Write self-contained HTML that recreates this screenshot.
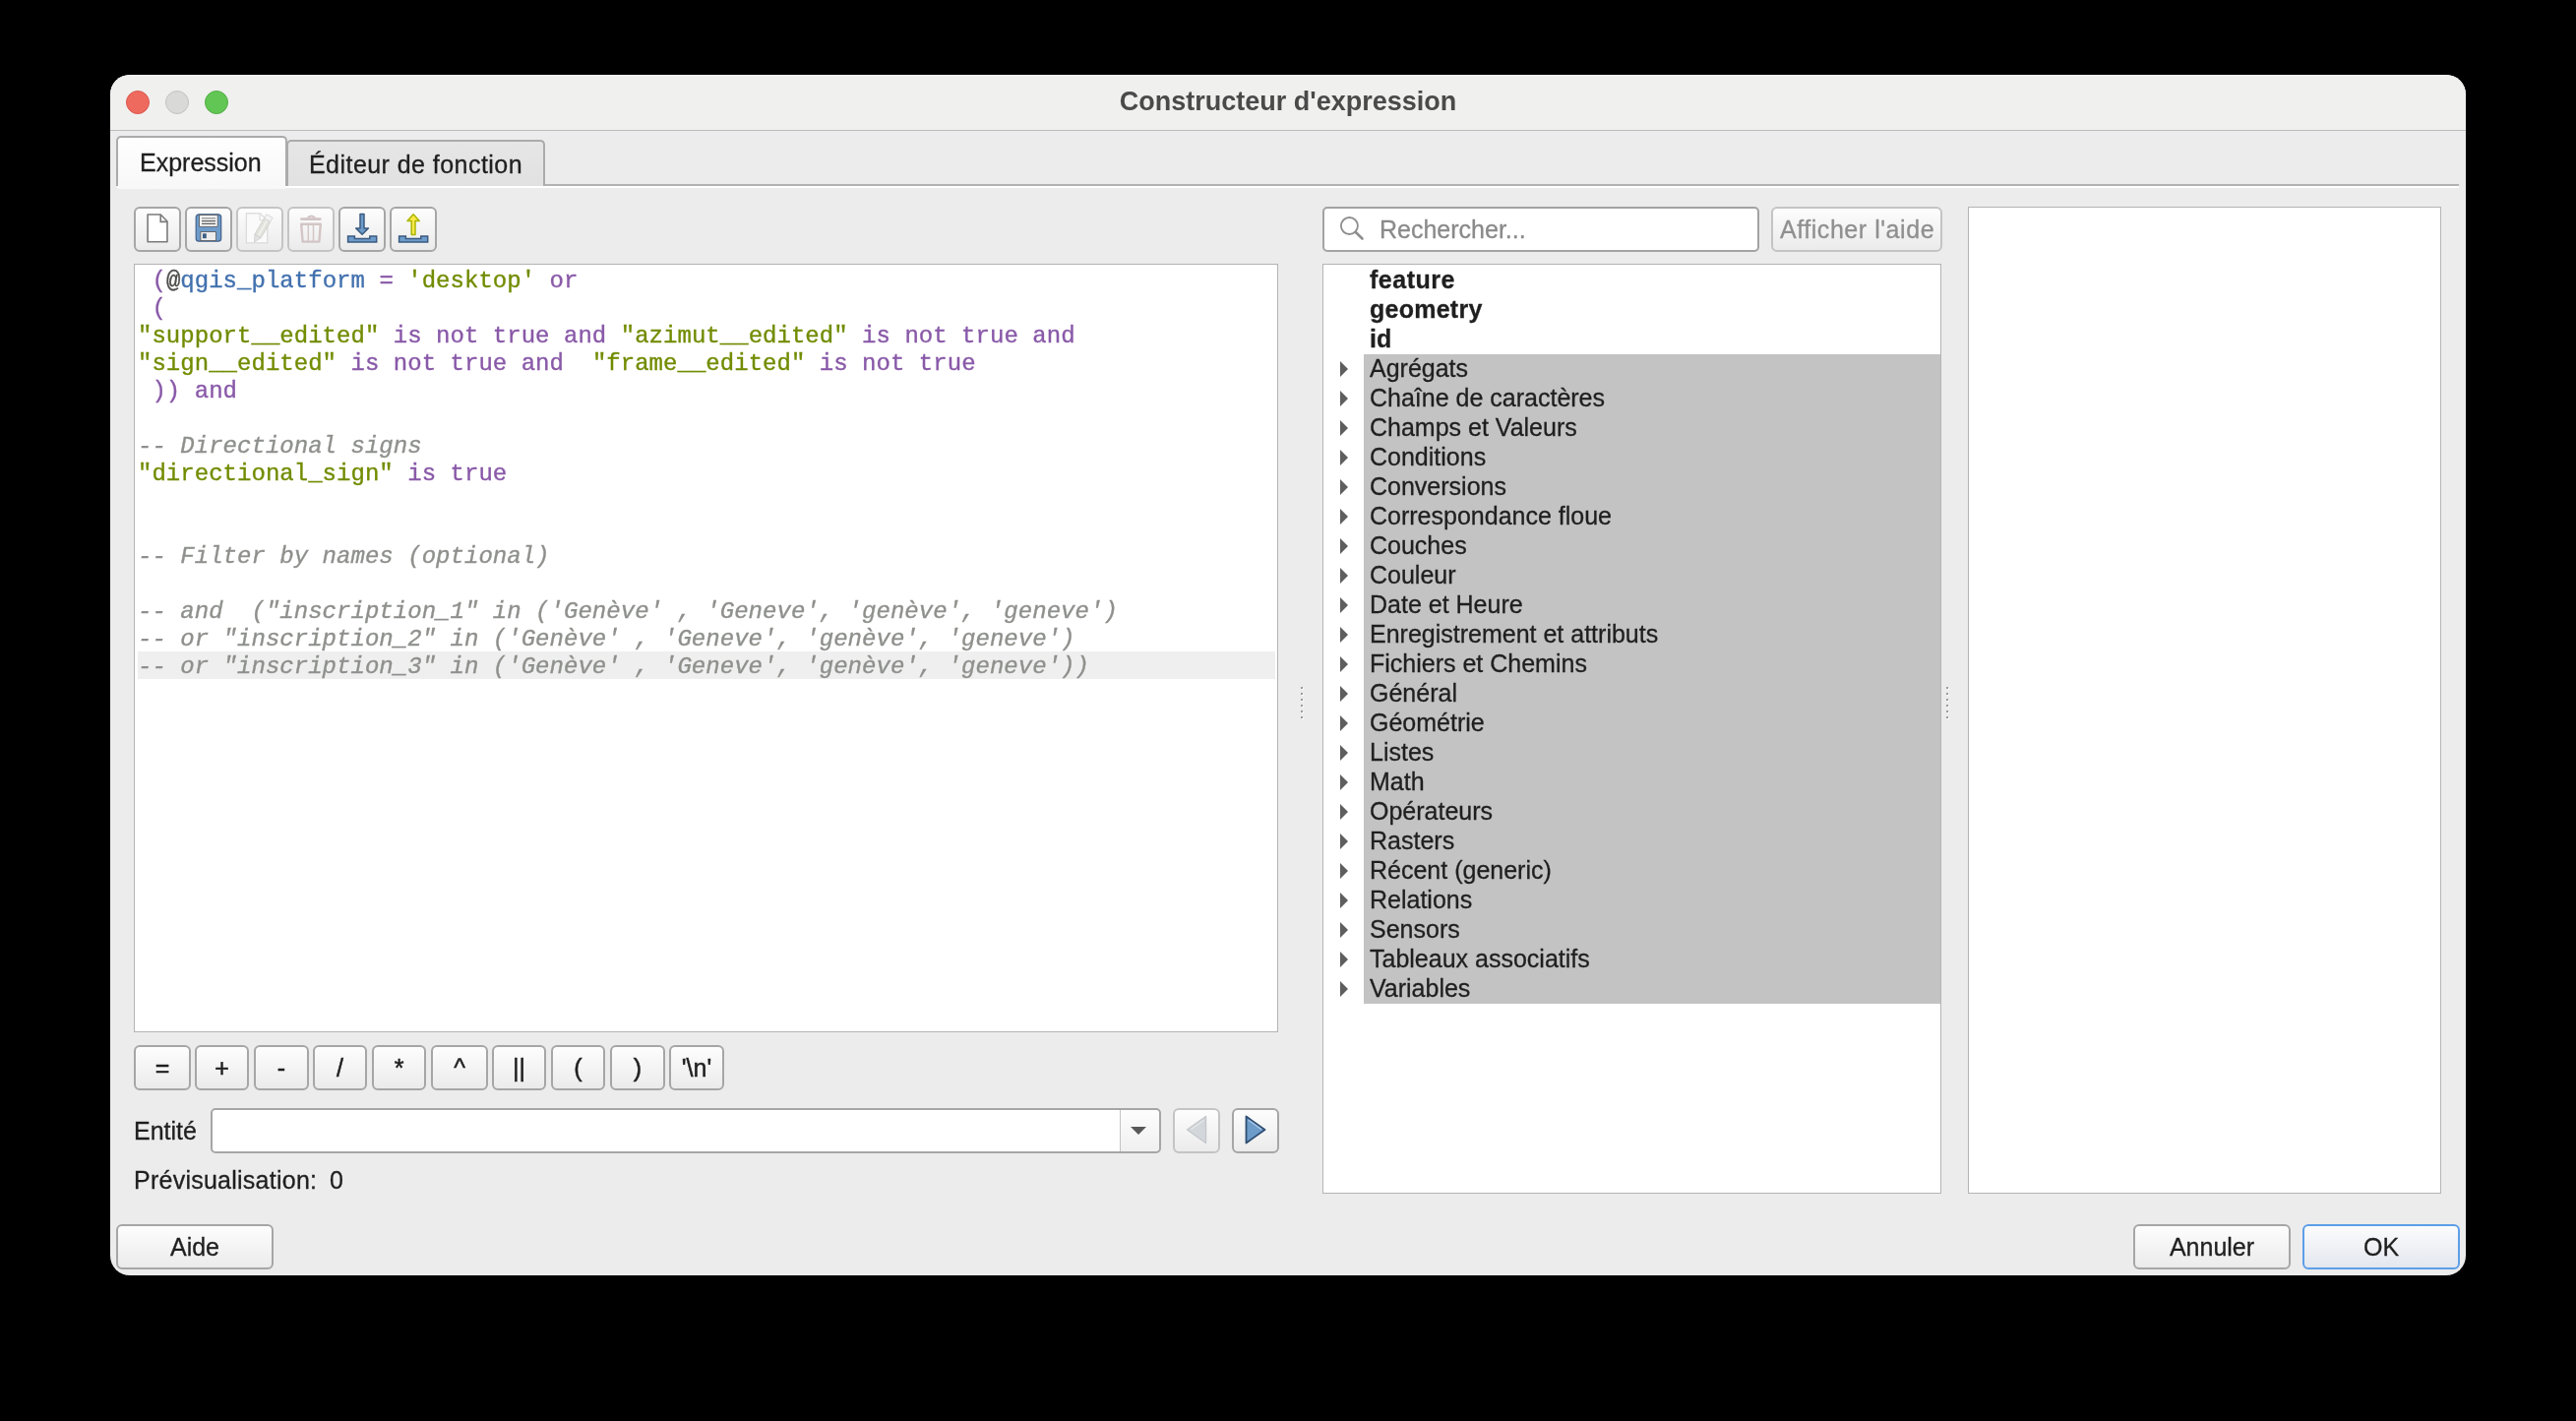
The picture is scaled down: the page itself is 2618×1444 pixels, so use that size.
<!DOCTYPE html>
<html><head><meta charset="utf-8">
<style>
*{box-sizing:border-box;margin:0;padding:0}
html,body{width:2618px;height:1444px;background:#000;overflow:hidden}
body{position:relative;font-family:"Liberation Sans",sans-serif;color:#1d1d1d}
.a{position:absolute}
#win{position:absolute;left:112px;top:76px;width:2394px;height:1220px;background:#ececec;border-radius:20px;overflow:hidden}
#titlebar{position:absolute;left:0;top:0;width:2394px;height:57px;background:#f0f0ef;border-bottom:1px solid #bcbcbc}
.tl{position:absolute;top:16px;width:24px;height:24px;border-radius:50%}
#title{position:absolute;left:0;width:2394px;top:12px;text-align:center;font-weight:bold;font-size:27px;color:#4a4a4a;line-height:30px;will-change:transform}
.btn{position:absolute;border:2px solid #a6a6a6;border-radius:6px;background:linear-gradient(#fdfdfd,#ebebeb)}
.btn.dis{border-color:#c4c4c4}
.ui{position:absolute;font-size:25px;line-height:30px;white-space:pre;will-change:transform;color:#1f1f1f;-webkit-text-stroke:0.3px currentColor}
.panel{position:absolute;background:#fff;border:1px solid #b4b4b4}
#code{position:absolute;left:139.5px;top:271.5px;letter-spacing:0.03px;-webkit-text-stroke:0.35px currentColor;font-family:"Liberation Mono",monospace;font-size:24px;line-height:28px;white-space:pre;color:#4d4d4c;will-change:transform}
.p{color:#8959a8}.b{color:#4271ae}.g{color:#718c00}.c{color:#8e908c;font-style:italic}
.tree{position:absolute;left:1392px;margin-top:-1px;font-size:25px;line-height:30px;white-space:pre;color:#1f1f1f;will-change:transform;-webkit-text-stroke:0.3px currentColor}
.arr{position:absolute;left:1362px;width:0;height:0;border-top:8px solid transparent;border-bottom:8px solid transparent;border-left:8px solid #5e5e5e;margin-top:-1px}
.op{position:absolute;top:1065px;-webkit-text-stroke:0.5px currentColor;height:44px;text-align:center;font-size:25px;line-height:40px;color:#1f1f1f;will-change:transform}
</style></head><body>
<div id="win">
  <div id="titlebar">
    <div class="tl" style="left:16px;background:#ee6a5f;border:1px solid #d9574d"></div>
    <div class="tl" style="left:56px;background:#d9d9d8;border:1px solid #c2c2c1"></div>
    <div class="tl" style="left:96px;background:#62c654;border:1px solid #52ad45"></div>
    <div id="title">Constructeur d'expression</div>
  </div>
</div>

<!-- tab bar -->
<div class="a" style="left:119px;top:187px;width:2380px;height:2px;background:#b2b2b2"></div>
<div class="a" style="left:119px;top:189px;width:2380px;height:2px;background:#fff"></div>
<div class="a" style="left:291px;top:142px;width:263px;height:47px;background:linear-gradient(#e6e6e6,#e1e1e1);border:2px solid #ababab;border-bottom:none;border-radius:5px 5px 0 0"></div>
<div class="a" style="left:118px;top:138px;width:174px;height:51px;background:linear-gradient(#fefefe,#f8f8f8);border:2px solid #ababab;border-bottom:none;border-radius:5px 5px 0 0"></div><div class="a" style="left:120px;top:189px;width:170px;height:3px;background:#f8f8f8"></div>
<div class="ui" style="left:142px;top:150px">Expression</div>
<div class="ui" style="left:314px;top:151.5px;letter-spacing:0.45px">Éditeur de fonction</div>

<!-- toolbar buttons -->
<div class="btn" style="left:136px;top:210px;width:48px;height:46px"></div>
<div class="btn" style="left:188px;top:210px;width:48px;height:46px"></div>
<div class="btn dis" style="left:240px;top:210px;width:48px;height:46px"></div>
<div class="btn dis" style="left:292px;top:210px;width:48px;height:46px"></div>
<div class="btn" style="left:344px;top:210px;width:48px;height:46px"></div>
<div class="btn" style="left:396px;top:210px;width:48px;height:46px"></div>


<!-- toolbar icons -->
<svg class="a" style="left:136px;top:210px" width="48" height="46" viewBox="0 0 48 46"><path d="M14.1,8 H27.2 L34,15 V35.8 H14.1 Z" fill="#fff" stroke="#7b7b7b" stroke-width="1.6" stroke-linejoin="round"/><path d="M27.2,8 V15.4 H34" fill="none" stroke="#7b7b7b" stroke-width="1.6"/></svg>
<svg class="a" style="left:188px;top:210px" width="48" height="46" viewBox="0 0 48 46"><rect x="11.2" y="7.8" width="25.5" height="27.4" rx="3" fill="#6d9ccc" stroke="#44618a" stroke-width="1.2"/><rect x="14.6" y="8.6" width="18.6" height="11.7" fill="#f2f2f2" stroke="#555" stroke-width="0.8"/><rect x="17" y="11.3" width="14" height="1.2" fill="#8e8e8e"/><rect x="17" y="14" width="14" height="1.2" fill="#5e5e5e"/><rect x="17" y="16.8" width="14" height="1.2" fill="#5e5e5e"/><rect x="15.9" y="25.6" width="15.6" height="9" fill="#ededed" stroke="#555" stroke-width="0.8"/><rect x="18" y="27.3" width="3.8" height="4.9" fill="#3f5f86"/></svg>
<svg class="a" style="left:240px;top:210px" width="48" height="46" viewBox="0 0 48 46"><path d="M10.3,6.9 H24.1 L31.8,13.8 V36.9 H10.3 Z" fill="#fafafa" stroke="#d9d9d9" stroke-width="1.2"/><path d="M24.1,6.9 V13.8 H31.8" fill="none" stroke="#dcdcdc" stroke-width="1.1"/><polygon points="18.5,36 18.92,28.14 25.14,31.78" fill="#e2e2e2" stroke="#d2d2d2" stroke-width="0.9" stroke-linejoin="round"/><polygon points="18.92,28.14 28.52,11.74 34.74,15.38 25.14,31.78" fill="#e3e3de" stroke="#cdcdc9" stroke-width="0.9"/><line x1="22.6" y1="29.5" x2="31.2" y2="14.2" stroke="#f1f1ee" stroke-width="1.6"/><polygon points="28.52,11.74 30.89,7.68 37.11,11.32 34.74,15.38" fill="#f3f3f3" stroke="#d6d6d6" stroke-width="0.9"/></svg>
<svg class="a" style="left:292px;top:210px" width="48" height="46" viewBox="0 0 48 46"><path d="M20.6,11.4 Q24.4,7.6 28.2,11.4" fill="none" stroke="#d3c5c5" stroke-width="1.8"/><rect x="13.1" y="11.2" width="21.6" height="2.8" rx="1.4" fill="#d3c5c5"/><path d="M14.2,17.8 H33.8 L32.4,35.6 H15.6 Z" fill="none" stroke="#d3c5c5" stroke-width="2.4" stroke-linejoin="round"/><line x1="21.3" y1="18" x2="21.3" y2="35" stroke="#d3c5c5" stroke-width="1.5"/><line x1="26.5" y1="18" x2="26.5" y2="35" stroke="#d3c5c5" stroke-width="1.5"/></svg>
<svg class="a" style="left:344px;top:210px" width="48" height="46" viewBox="0 0 48 46"><path d="M22,7.6 H26 V21.9 H30.4 L24.1,28.3 L17.7,21.9 H22 Z" fill="#6d9ccc" stroke="#3c5a7f" stroke-width="1.5" stroke-linejoin="round"/><path d="M9.6,29.9 H16.4 V32.4 H31.8 V29.9 H38.7 V35.9 H9.6 Z" fill="#6d9ccc" stroke="#3c5a7f" stroke-width="1.5"/></svg>
<svg class="a" style="left:396px;top:210px" width="48" height="46" viewBox="0 0 48 46"><path d="M24.1,7.8 L30.2,14.6 H26 V28.6 H22.2 V14.6 H18 Z" fill="#fde84a" stroke="#a9b700" stroke-width="1.5" stroke-linejoin="round"/><path d="M9.6,29.9 H16.4 V32.4 H31.8 V29.9 H38.7 V35.9 H9.6 Z" fill="#6d9ccc" stroke="#3c5a7f" stroke-width="1.5"/></svg>

<!-- editor -->
<div class="panel" style="left:136px;top:268px;width:1163px;height:781px"></div>
<div class="a" style="left:140px;top:662px;width:1156px;height:28px;background:#efefef"></div>
<div id="code"> <span class="p">(</span>@<span class="b">qgis_platform</span> <span class="p">=</span> <span class="g">'desktop'</span> <span class="p">or</span>
 <span class="p">(</span>
<span class="g">"support__edited"</span> <span class="p">is not true and</span> <span class="g">"azimut__edited"</span> <span class="p">is not true and</span>
<span class="g">"sign__edited"</span> <span class="p">is not true and</span>  <span class="g">"frame__edited"</span> <span class="p">is not true</span>
 <span class="p">)) and</span>

<span class="c">-- Directional signs</span>
<span class="g">"directional_sign"</span> <span class="p">is true</span>


<span class="c">-- Filter by names (optional)</span>

<span class="c">-- and  ("inscription_1" in ('Genève' , 'Geneve', 'genève', 'geneve')</span>
<span class="c">-- or "inscription_2" in ('Genève' , 'Geneve', 'genève', 'geneve')</span>
<span class="c">-- or "inscription_3" in ('Genève' , 'Geneve', 'genève', 'geneve'))</span></div>

<!-- search -->
<div class="a" style="left:1344px;top:210px;width:444px;height:46px;background:#fff;border:2px solid #a3a3a3;border-radius:5px"></div>
<svg class="a" style="left:1358px;top:216px" width="32" height="32" viewBox="0 0 32 32"><circle cx="13.4" cy="13.5" r="8.5" fill="none" stroke="#8e8e8e" stroke-width="1.8"/><line x1="19.6" y1="19.8" x2="26.5" y2="26.5" stroke="#8e8e8e" stroke-width="2.6" stroke-linecap="round"/></svg>
<div class="ui" style="left:1402px;top:218px;color:#8a8a8a">Rechercher...</div>
<div class="btn dis" style="left:1800px;top:210px;width:174px;height:46px"></div>
<div class="ui" style="left:1809px;top:218px;color:#8f8f8f;letter-spacing:0.55px">Afficher l'aide</div>

<!-- tree -->
<div class="panel" style="left:1344px;top:268px;width:629px;height:945px"></div>
<div class="a" style="left:1386px;top:360px;width:586px;height:660px;background:#c3c3c3"></div>
<div class="tree" style="top:270px;font-weight:bold;letter-spacing:0.5px">feature</div>
<div class="tree" style="top:300px;font-weight:bold;letter-spacing:0.25px">geometry</div>
<div class="tree" style="top:330px;font-weight:bold">id</div>
<div class="arr" style="top:368px"></div>
<div class="tree" style="top:360px">Agrégats</div>
<div class="arr" style="top:398px"></div>
<div class="tree" style="top:390px">Chaîne de caractères</div>
<div class="arr" style="top:428px"></div>
<div class="tree" style="top:420px">Champs et Valeurs</div>
<div class="arr" style="top:458px"></div>
<div class="tree" style="top:450px">Conditions</div>
<div class="arr" style="top:488px"></div>
<div class="tree" style="top:480px">Conversions</div>
<div class="arr" style="top:518px"></div>
<div class="tree" style="top:510px">Correspondance floue</div>
<div class="arr" style="top:548px"></div>
<div class="tree" style="top:540px">Couches</div>
<div class="arr" style="top:578px"></div>
<div class="tree" style="top:570px">Couleur</div>
<div class="arr" style="top:608px"></div>
<div class="tree" style="top:600px">Date et Heure</div>
<div class="arr" style="top:638px"></div>
<div class="tree" style="top:630px">Enregistrement et attributs</div>
<div class="arr" style="top:668px"></div>
<div class="tree" style="top:660px">Fichiers et Chemins</div>
<div class="arr" style="top:698px"></div>
<div class="tree" style="top:690px">Général</div>
<div class="arr" style="top:728px"></div>
<div class="tree" style="top:720px">Géométrie</div>
<div class="arr" style="top:758px"></div>
<div class="tree" style="top:750px">Listes</div>
<div class="arr" style="top:788px"></div>
<div class="tree" style="top:780px">Math</div>
<div class="arr" style="top:818px"></div>
<div class="tree" style="top:810px">Opérateurs</div>
<div class="arr" style="top:848px"></div>
<div class="tree" style="top:840px">Rasters</div>
<div class="arr" style="top:878px"></div>
<div class="tree" style="top:870px">Récent (generic)</div>
<div class="arr" style="top:908px"></div>
<div class="tree" style="top:900px">Relations</div>
<div class="arr" style="top:938px"></div>
<div class="tree" style="top:930px">Sensors</div>
<div class="arr" style="top:968px"></div>
<div class="tree" style="top:960px">Tableaux associatifs</div>
<div class="arr" style="top:998px"></div>
<div class="tree" style="top:990px">Variables</div>

<!-- help panel -->
<div class="panel" style="left:2000px;top:210px;width:481px;height:1003px"></div>

<!-- splitter dots -->
<div class="a" style="left:1323px;top:699px;width:2px;height:2px;background:#f8f8f8"></div><div class="a" style="left:1322px;top:698px;width:2px;height:2px;background:#9c9c9c"></div>
<div class="a" style="left:1323px;top:705px;width:2px;height:2px;background:#f8f8f8"></div><div class="a" style="left:1322px;top:704px;width:2px;height:2px;background:#9c9c9c"></div>
<div class="a" style="left:1323px;top:711px;width:2px;height:2px;background:#f8f8f8"></div><div class="a" style="left:1322px;top:710px;width:2px;height:2px;background:#9c9c9c"></div>
<div class="a" style="left:1323px;top:717px;width:2px;height:2px;background:#f8f8f8"></div><div class="a" style="left:1322px;top:716px;width:2px;height:2px;background:#9c9c9c"></div>
<div class="a" style="left:1323px;top:723px;width:2px;height:2px;background:#f8f8f8"></div><div class="a" style="left:1322px;top:722px;width:2px;height:2px;background:#9c9c9c"></div>
<div class="a" style="left:1323px;top:729px;width:2px;height:2px;background:#f8f8f8"></div><div class="a" style="left:1322px;top:728px;width:2px;height:2px;background:#9c9c9c"></div>
<div class="a" style="left:1979px;top:699px;width:2px;height:2px;background:#f8f8f8"></div><div class="a" style="left:1978px;top:698px;width:2px;height:2px;background:#9c9c9c"></div>
<div class="a" style="left:1979px;top:705px;width:2px;height:2px;background:#f8f8f8"></div><div class="a" style="left:1978px;top:704px;width:2px;height:2px;background:#9c9c9c"></div>
<div class="a" style="left:1979px;top:711px;width:2px;height:2px;background:#f8f8f8"></div><div class="a" style="left:1978px;top:710px;width:2px;height:2px;background:#9c9c9c"></div>
<div class="a" style="left:1979px;top:717px;width:2px;height:2px;background:#f8f8f8"></div><div class="a" style="left:1978px;top:716px;width:2px;height:2px;background:#9c9c9c"></div>
<div class="a" style="left:1979px;top:723px;width:2px;height:2px;background:#f8f8f8"></div><div class="a" style="left:1978px;top:722px;width:2px;height:2px;background:#9c9c9c"></div>
<div class="a" style="left:1979px;top:729px;width:2px;height:2px;background:#f8f8f8"></div><div class="a" style="left:1978px;top:728px;width:2px;height:2px;background:#9c9c9c"></div>

<!-- operators -->
<div class="btn" style="left:136px;top:1062px;width:58px;height:46px"></div>
<div class="op" style="left:136px;width:58px">=</div>
<div class="btn" style="left:198px;top:1062px;width:55px;height:46px"></div>
<div class="op" style="left:198px;width:55px">+</div>
<div class="btn" style="left:258px;top:1062px;width:56px;height:46px"></div>
<div class="op" style="left:258px;width:56px">-</div>
<div class="btn" style="left:318px;top:1062px;width:55px;height:46px"></div>
<div class="op" style="left:318px;width:55px">/</div>
<div class="btn" style="left:378px;top:1062px;width:55px;height:46px"></div>
<div class="op" style="left:378px;width:55px">*</div>
<div class="btn" style="left:438px;top:1062px;width:58px;height:46px"></div>
<div class="op" style="left:438px;width:58px">^</div>
<div class="btn" style="left:500px;top:1062px;width:55px;height:46px"></div>
<div class="op" style="left:500px;width:55px">||</div>
<div class="btn" style="left:560px;top:1062px;width:55px;height:46px"></div>
<div class="op" style="left:560px;width:55px">(</div>
<div class="btn" style="left:620px;top:1062px;width:56px;height:46px"></div>
<div class="op" style="left:620px;width:56px">)</div>
<div class="btn" style="left:680px;top:1062px;width:56px;height:46px"></div>
<div class="op" style="left:680px;width:56px">'\n'</div>

<!-- entity row -->
<div class="ui" style="left:136px;top:1134px">Entité</div>
<div class="a" style="left:214px;top:1126px;width:966px;height:46px;border:2px solid #a6a6a6;border-radius:5px;background:linear-gradient(#fdfdfd,#f0f0f0)"></div>
<div class="a" style="left:216px;top:1128px;width:923px;height:42px;background:#fff;border-right:1px solid #c4c4c4;border-radius:4px 0 0 4px"></div>
<div class="a" style="left:1149px;top:1145px;width:0;height:0;border-left:8px solid transparent;border-right:8px solid transparent;border-top:8px solid #585858"></div>
<div class="btn dis" style="left:1192px;top:1126px;width:48px;height:46px"></div>
<svg class="a" style="left:1192px;top:1126px" width="48" height="46"><polygon points="14.5,22 33.5,8.5 33.5,35.5" fill="#d3d7db" stroke="#c5c8cb" stroke-width="1.5" stroke-linejoin="round"/><path d="M18.5,21.6 L31.4,12.4" stroke="#e6e8ea" stroke-width="1.2"/></svg>
<div class="btn" style="left:1252px;top:1126px;width:48px;height:46px"></div>
<svg class="a" style="left:1252px;top:1126px" width="48" height="46"><polygon points="14.5,8.5 33.5,22 14.5,35.5" fill="#6d9ccb" stroke="#2f4e72" stroke-width="1.8" stroke-linejoin="round"/><path d="M16.6,12 L30,21.6" stroke="#a9c6e6" stroke-width="1.3"/></svg>
<div class="ui" style="left:136px;top:1184px;letter-spacing:0.25px">Prévisualisation:</div><div class="ui" style="left:335px;top:1184px">0</div>

<!-- bottom buttons -->
<div class="btn" style="left:118px;top:1244px;width:160px;height:46px"></div>
<div class="ui" style="left:118px;top:1251.5px;width:160px;text-align:center">Aide</div>
<div class="btn" style="left:2168px;top:1244px;width:160px;height:46px"></div>
<div class="ui" style="left:2168px;top:1251.5px;width:160px;text-align:center">Annuler</div>
<div class="a" style="left:2340px;top:1244px;width:160px;height:46px;border:2px solid #5d9ee8;border-radius:6px;background:linear-gradient(#fcfcfd,#e3e7ee)"></div>
<div class="ui" style="left:2340px;top:1251.5px;width:160px;text-align:center">OK</div>
</body></html>
